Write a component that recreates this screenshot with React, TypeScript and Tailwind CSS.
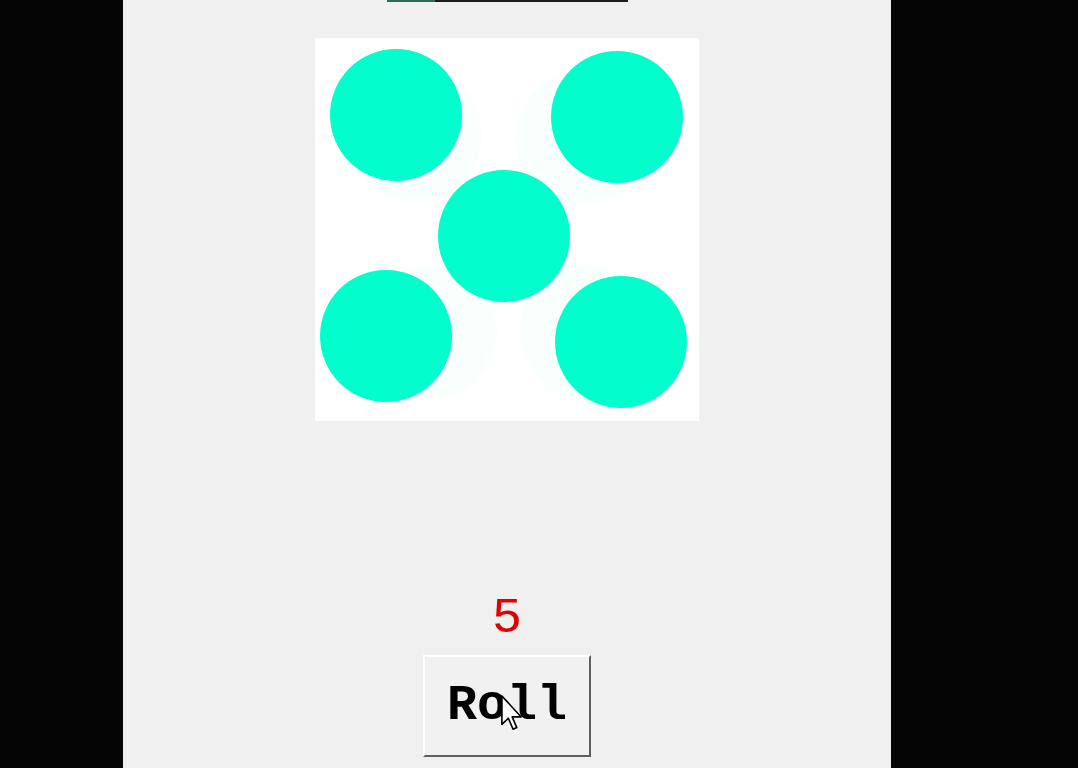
import React from 'react';

const dots = [
  { left: 'left-[15px] top-[11px]' },
  { left: 'left-[236px] top-[13px]' },
  { left: 'left-[123px] top-[132px]' },
  { left: 'left-[5px] top-[232px]' },
  { left: 'left-[240px] top-[238px]' },
];

const ghosts = [
  'left-[35px] top-[31px]',
  'left-[200px] top-[35px]',
  'left-[50px] top-[228px]',
  'left-[205px] top-[227px]',
];

const App: React.FC = () => {
  return (
    <div className="min-h-screen bg-[#050505] flex">
      <div className="ml-[123px] w-[768px] h-[768px] bg-[#f0f0f0] flex flex-col items-center relative">
        {/* strip at the top */}
        <div className="h-[2px] w-[241px] flex">
          <div className="w-[48px] bg-[#2f6b5c]" />
          <div className="flex-1 bg-[#1c1c1c]" />
        </div>

        {/* die face */}
        <div className="mt-[36px] w-[384px] h-[383px] bg-white relative overflow-hidden">
          {ghosts.map((g, i) => (
            <div key={i} className={`absolute ${g} w-[132px] h-[132px] rounded-full bg-[#f9fffd]`} />
          ))}
          {dots.map((d, i) => (
            <div key={i} className={`absolute ${d.left} w-[132px] h-[132px] rounded-full bg-[#00ffcc] blur-[0.6px]`} />
          ))}
        </div>

        {/* result */}
        <div className="mt-[173px] h-[50px] leading-[50px] text-[50px] text-[#e00000] font-['Liberation_Mono',monospace]">
          5
        </div>

        {/* button */}
        <button className="mt-[11px] w-[168px] h-[102px] bg-[#f1f1f1] border-2 border-t-white border-l-white border-b-[#5f5f5f] border-r-[#5f5f5f] text-[50px] font-bold text-black font-['Liberation_Mono',monospace] leading-none relative">
          Roll
          <svg
            className="absolute left-[76px] top-[38px]"
            width="22"
            height="36"
            viewBox="0 0 12 19.5"
          >
            <path
              d="M0.5 0.5 L0.5 16 L4 12.6 L6.6 18.6 L8.6 17.7 L6.1 11.9 L11 11.9 Z"
              fill="white"
              stroke="black"
              strokeWidth="0.9"
              strokeLinejoin="round"
            />
          </svg>
        </button>
      </div>
    </div>
  );
};

export default App;
